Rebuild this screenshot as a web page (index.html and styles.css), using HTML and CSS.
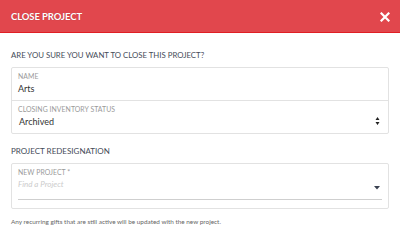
FILE: index.html
```html
<!DOCTYPE html>
<html>
<head>
<meta charset="utf-8">
<link rel="stylesheet" href="styles.css">
</head>
<body>
<div class="modal">
  <header class="head">
    <span class="title">CLOSE PROJECT</span>
    <svg class="close" width="10" height="10" viewBox="0 0 10 10"><path d="M1.5 1.5L8.5 8.5M8.5 1.5L1.5 8.5" stroke="#fff" stroke-width="2.2" stroke-linecap="square"/></svg>
  </header>
  <div class="body">
    <h2 class="q">ARE YOU SURE YOU WANT TO CLOSE THIS PROJECT?</h2>
    <div class="box">
      <div class="row">
        <div class="label">NAME</div>
        <div class="val">Arts</div>
      </div>
      <div class="row">
        <div class="label">CLOSING INVENTORY STATUS</div>
        <div class="selrow">
          <span class="val ind">Archived</span>
          <svg width="5" height="8" viewBox="0 0 5 8"><path d="M2.5 0L4.5 3H0.5Z M2.5 8L4.5 5H0.5Z" fill="#222"/></svg>
        </div>
      </div>
    </div>
    <h2 class="sub">PROJECT REDESIGNATION</h2>
    <div class="box box2">
      <div class="label">NEW PROJECT *</div>
      <div class="inp">
        <span class="ph">Find a Project</span>
        <svg width="6" height="3.5" viewBox="0 0 6 3.5"><path d="M0 0H6L3 3.5Z" fill="#3a4150"/></svg>
      </div>
    </div>
    <p class="note">Any recurring gifts that are still active will be updated with the new project.</p>
  </div>
</div>
</body>
</html>
```
FILE: styles.css
```css
html, body { margin: 0; padding: 0; background: #fff; }
body { font-family: Lato, "Noto Sans", sans-serif; width: 400px; height: 229px; overflow: hidden; }
.head {
  height: 32px;
  background: #e1474d;
  border-bottom: 1px solid #e01e24;
  display: flex;
  align-items: center;
  justify-content: space-between;
  padding: 0 10px 0 11px;
}
.title { color: #fff; font-weight: 700; font-size: 9.5px; letter-spacing: -0.1px; text-shadow: 0 0 1px rgba(0,0,0,0.25); }
.close { margin-top: 2px; }
.body { padding: 0 11px; }
.q { margin: 17px 0 0; font-weight: 400; font-size: 7.8px; line-height: 10px; color: #444b58; }
.box { margin-top: 7px; border: 1px solid #e2e2e2; border-radius: 2px; }
.row { height: 32px; padding: 4px 6px 0; box-sizing: border-box; }
.row + .row { border-top: 1px solid #e2e2e2; height: 33px; }
.label { font-size: 6.9px; line-height: 9px; color: #9a9a9a; letter-spacing: 0.05px; }
.val { font-size: 9px; line-height: 12px; color: #333; display: block; margin-top: 2px; }
.selrow { display: flex; justify-content: space-between; align-items: center; padding-right: 2px; }
.ind { padding-left: 1px; }
.sub { margin: 12px 0 0; font-weight: 400; font-size: 8px; line-height: 10px; color: #444b58; }
.box2 { margin-top: 7px; height: 46px; box-sizing: border-box; padding: 4px 6px 0; }
.inp { border-bottom: 1px solid #cfcfcf; height: 22px; display: flex; justify-content: space-between; align-items: center; padding-right: 2px; }
.ph { font-style: italic; color: #cccccc; font-size: 8px; line-height: 10px; align-self: flex-start; margin-top: 2px; }
.note { margin: 8.5px 0 0; font-size: 6.4px; line-height: 8px; color: #666; }
```
